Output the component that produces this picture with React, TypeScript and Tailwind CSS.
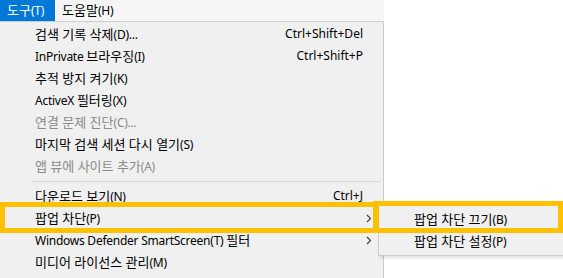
import React from "react";

const FONT = { fontFamily: '"Noto Sans", "Noto Sans CJK KR", sans-serif' };

function T({ text }: { text: string }) {
  const parts = text.split(/([\uAC00-\uD7A3\u3131-\u318E]+(?: [\uAC00-\uD7A3\u3131-\u318E]+)*)/);
  return (
    <span>
      {parts.map((p, i) =>
        /[\uAC00-\uD7A3]/.test(p) ? (
          <span key={i} className="text-[13px]">
            {p}
          </span>
        ) : (
          <span key={i} className="tracking-[-0.25px]">
            {p}
          </span>
        )
      )}
    </span>
  );
}

type Item =
  | { kind: "item"; label: string; shortcut?: string; disabled?: boolean; sub?: boolean }
  | { kind: "sep" };

const items: Item[] = [
  { kind: "item", label: "검색 기록 삭제(D)...", shortcut: "Ctrl+Shift+Del" },
  { kind: "item", label: "InPrivate 브라우징(I)", shortcut: "Ctrl+Shift+P" },
  { kind: "item", label: "추적 방지 켜기(K)" },
  { kind: "item", label: "ActiveX 필터링(X)" },
  { kind: "item", label: "연결 문제 진단(C)...", disabled: true },
  { kind: "item", label: "마지막 검색 세션 다시 열기(S)" },
  { kind: "item", label: "앱 뷰에 사이트 추가(A)", disabled: true },
  { kind: "sep" },
  { kind: "item", label: "다운로드 보기(N)", shortcut: "Ctrl+J" },
  { kind: "item", label: "팝업 차단(P)", sub: true },
  { kind: "item", label: "Windows Defender SmartScreen(T) 필터", sub: true },
  { kind: "item", label: "미디어 라이선스 관리(M)" },
];

function Chevron() {
  return (
    <svg width="6" height="9" viewBox="0 0 6 9" className="absolute left-[366px] top-[7px]">
      <polyline points="1,1 4.5,4.5 1,8" fill="none" stroke="#3c3c3c" strokeWidth="1.1" />
    </svg>
  );
}

export default function App() {
  return (
    <div className="relative w-[563px] h-[278px] overflow-hidden bg-white text-[12px] text-black" style={FONT}>
      {/* menubar */}
      <div className="flex w-[384px] h-[21px] bg-[#f5f5f5] items-stretch leading-none">
        <div className="w-[55px] bg-[#0078d7] text-white flex items-center pl-[7px]">
          <T text="도구(T)" />
        </div>
        <div className="flex items-center pl-[7px]">
          <T text="도움말(H)" />
        </div>
      </div>

      {/* main menu */}
      <div className="w-[384px] bg-[#f0f0f0] border-t border-r border-[#cccccc] pt-[1px] pb-[6px]">
        {items.map((it, i) =>
          it.kind === "sep" ? (
            <div key={i} className="h-[8px] flex items-center">
              <div className="ml-[31px] mr-[2px] h-px flex-1 bg-[#d7d7d7]" />
            </div>
          ) : (
            <div
              key={i}
              className={`relative h-[22px] flex items-center pl-[35px] pr-[20px] leading-none ${
                it.disabled ? "text-[#8a8a8a]" : "text-black"
              }`}
            >
              <T text={it.label} />
              {it.shortcut && <span className="ml-auto">{it.shortcut}</span>}
              {it.sub && <Chevron />}
            </div>
          )
        )}
      </div>

      {/* submenu */}
      <div className="absolute left-[378px] top-[203px] w-[200px] bg-[#f0f0f0] border border-[#cccccc] pt-[4px] pb-[2px] shadow-[2px_2px_3px_rgba(0,0,0,0.12)]">
        <div className="h-[22px] flex items-center pl-[35px] leading-none">
          <T text="팝업 차단 끄기(B)" />
        </div>
        <div className="h-[23px] flex items-center pl-[35px] leading-none">
          <T text="팝업 차단 설정(P)" />
        </div>
      </div>

      {/* highlight annotations */}
      <div className="absolute left-0 top-[202px] w-[379px] h-[31px] border-[5px] border-[#ffc000]" />
      <div className="absolute left-[373px] top-[201px] w-[190px] h-[32px] border-[5px] border-[#ffc000]" />
    </div>
  );
}
